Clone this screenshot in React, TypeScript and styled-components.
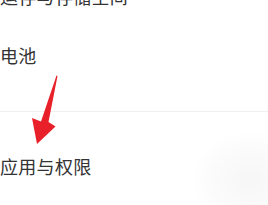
import React from "react";
import styled, { createGlobalStyle } from "styled-components";

const Global = createGlobalStyle`
  html, body { margin: 0; padding: 0; background: #ffffff; }
  body { width: 268px; height: 205px; overflow: hidden; }
`;

const Page = styled.div`
  position: relative;
  width: 268px;
  height: 205px;
  overflow: hidden;
  background: #ffffff;
  font-family: "Noto Sans CJK SC", "Noto Sans", sans-serif;
  color: #333333;
`;

const List = styled.div`
  display: flex;
  flex-direction: column;
  margin-top: -18px;
`;

const Item = styled.div<{ $h: number; $pt: number; $divider?: boolean }>`
  height: ${(p) => p.$h}px;
  padding-top: ${(p) => p.$pt}px;
  display: flex;
  align-items: flex-start;
  font-size: 18px;
  line-height: 24px;
  letter-spacing: 0.3px;
  border-bottom: ${(p) => (p.$divider ? "1px solid #f0f0f0" : "none")};
  box-sizing: border-box;
`;

const Arrow = styled.svg`
  position: absolute;
  left: 0;
  top: 0;
  pointer-events: none;
`;

const Shade = styled.div`
  position: absolute;
  left: 190px;
  top: 130px;
  width: 110px;
  height: 100px;
  background: radial-gradient(ellipse at 55% 50%, rgba(0,0,0,0.035) 0%, rgba(0,0,0,0.015) 45%, rgba(0,0,0,0) 70%);
  pointer-events: none;
`;

export default function App() {
  return (
    <Page>
      <Global />
      <List>
        <Item $h={28} $pt={2}>运存与存储空间</Item>
        <Item $h={102} $pt={33} $divider>电池</Item>
        <Item $h={100} $pt={42}>应用与权限</Item>
      </List>
      <Shade />
      <Arrow width="268" height="205" viewBox="0 0 268 205">
        <polygon
          points="56.5,75.5 57.5,76 48.5,122 55.5,126.5 37,144 32,118 41,121.5"
          fill="#e8202a"
        />
      </Arrow>
    </Page>
  );
}
